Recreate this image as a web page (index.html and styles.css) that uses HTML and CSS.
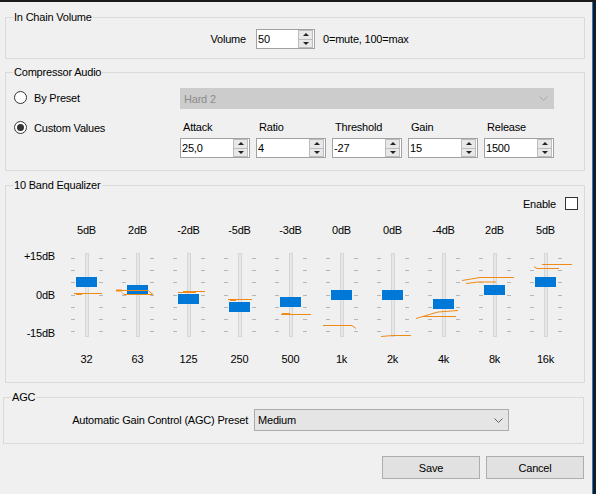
FILE: index.html
```html
<!DOCTYPE html>
<html lang="en">
  <head>
    <meta charset="UTF-8" />
    <title>Audio Settings</title>
    <link rel="stylesheet" href="styles.css">
  </head>
  <body>
    <div class="window">
      <fieldset class="group volume-group">
        <legend>In Chain Volume</legend>
        <div class="volume-row">
          <span class="row-label volume-label">Volume</span>
          <div class="spin volume-spin">
            <span class="spin-value">50</span>
            <span class="spin-btns"><i class="up"></i><i class="down"></i></span>
          </div>
          <span class="hint">0=mute, 100=max</span>
        </div>
      </fieldset>

      <fieldset class="group compressor-group">
        <legend>Compressor Audio</legend>
        <div class="compressor">
          <div class="radio"><span class="dot"></span>By Preset</div>
          <div class="combo disabled">
            <span class="combo-text">Hard 2</span>
            <svg class="chevron" width="9" height="5" viewBox="0 0 9 5"><path d="M0.5 0.5 L4.5 4.5 L8.5 0.5" fill="none" stroke="#a8a8a8" /></svg>
          </div>
          <div class="radio checked"><span class="dot"></span>Custom Values</div>
          <div class="params">
            <span class="param-label">Attack</span>
            <span class="param-label">Ratio</span>
            <span class="param-label">Threshold</span>
            <span class="param-label">Gain</span>
            <span class="param-label">Release</span>
            <div class="spin"><span class="spin-value">25,0</span><span class="spin-btns"><i class="up"></i><i class="down"></i></span></div>
            <div class="spin"><span class="spin-value">4</span><span class="spin-btns"><i class="up"></i><i class="down"></i></span></div>
            <div class="spin"><span class="spin-value">-27</span><span class="spin-btns"><i class="up"></i><i class="down"></i></span></div>
            <div class="spin"><span class="spin-value">15</span><span class="spin-btns"><i class="up"></i><i class="down"></i></span></div>
            <div class="spin"><span class="spin-value">1500</span><span class="spin-btns"><i class="up"></i><i class="down"></i></span></div>
          </div>
        </div>
      </fieldset>

      <fieldset class="group eq-group">
        <legend>10 Band Equalizer</legend>
        <div class="enable-row">Enable<span class="check"></span></div>
        <div class="bands">
          <div class="scale">
            <span>+15dB</span>
            <span>0dB</span>
            <span>-15dB</span>
          </div>
          <div class="band"><span class="db">5dB</span><div class="slider"><span class="track"></span><span class="thumb" style="top: 30px"></span></div><span class="freq">32</span></div>
          <div class="band"><span class="db">2dB</span><div class="slider"><span class="track"></span><span class="thumb" style="top: 38px"></span></div><span class="freq">63</span></div>
          <div class="band"><span class="db">-2dB</span><div class="slider"><span class="track"></span><span class="thumb" style="top: 47px"></span></div><span class="freq">125</span></div>
          <div class="band"><span class="db">-5dB</span><div class="slider"><span class="track"></span><span class="thumb" style="top: 55px"></span></div><span class="freq">250</span></div>
          <div class="band"><span class="db">-3dB</span><div class="slider"><span class="track"></span><span class="thumb" style="top: 50px"></span></div><span class="freq">500</span></div>
          <div class="band"><span class="db">0dB</span><div class="slider"><span class="track"></span><span class="thumb" style="top: 43px"></span></div><span class="freq">1k</span></div>
          <div class="band"><span class="db">0dB</span><div class="slider"><span class="track"></span><span class="thumb" style="top: 43px"></span></div><span class="freq">2k</span></div>
          <div class="band"><span class="db">-4dB</span><div class="slider"><span class="track"></span><span class="thumb" style="top: 52px"></span></div><span class="freq">4k</span></div>
          <div class="band"><span class="db">2dB</span><div class="slider"><span class="track"></span><span class="thumb" style="top: 38px"></span></div><span class="freq">8k</span></div>
          <div class="band"><span class="db">5dB</span><div class="slider"><span class="track"></span><span class="thumb" style="top: 30px"></span></div><span class="freq">16k</span></div>

          <!-- orange curve leftovers drawn over the sliders -->
          <svg class="curve" width="580" height="160" viewBox="0 0 580 160">
            <g fill="none" stroke="#f08a17" stroke-width="1">
              <path d="M68 69.5 H96" />
              <path d="M70 70 H76" stroke-width="2" />
              <path d="M110 66.5 H142 L147 70.5 H118 L116 68.5" />
              <path d="M110 66.5 H116" stroke-width="2" />
              <path d="M177 67.5 H199" />
              <path d="M172 68.5 H190" />
              <path d="M222 75.5 H246" />
              <path d="M224 76 H230" stroke-width="2" />
              <path d="M275 90.5 H305" />
              <path d="M276 90 H284" stroke-width="2" />
              <path d="M317 101.5 H346 L350 104.5" />
              <path d="M375 112.5 L387 111.5 H405" />
              <path d="M410 94.5 L432 88 L452 86.5" />
              <path d="M417 92.5 H450" />
              <path d="M456 56.5 L474 53.5 H508" />
              <path d="M460 59.5 L472 58 H490" />
              <path d="M536 40.5 H566" />
              <path d="M528 42.5 L531 44.5 H553" />
            </g>
          </svg>
        </div>
      </fieldset>

      <fieldset class="group agc-group">
        <legend>AGC</legend>
        <div class="agc-row">
          <span class="row-label agc-label">Automatic Gain Control (AGC) Preset</span>
          <div class="combo agc-combo">
            <span class="combo-text">Medium</span>
            <svg class="chevron" width="9" height="5" viewBox="0 0 9 5"><path d="M0.5 0.5 L4.5 4.5 L8.5 0.5" fill="none" stroke="#606060" /></svg>
          </div>
        </div>
      </fieldset>

      <div class="buttons">
        <button class="btn">Save</button>
        <button class="btn">Cancel</button>
      </div>
    </div>
  </body>
</html>
```

FILE: styles.css
```css
body {
  margin: 0;
  background: #1a1a1a;
  font-family: "Liberation Sans", Arial, sans-serif;
  font-size: 11px;
  letter-spacing: -0.2px;
  color: #000;
}
.window {
  width: 592px;
  height: 488px;
  margin-top: 2px;
  padding-top: 9px;
  box-sizing: content-box;
  background: #f0f0f0;
  border-right: 1px solid #1a7fd4;
  border-bottom: 1px solid #1a7fd4;
}
.window > * {
  box-sizing: border-box;
}

/* group boxes */
.group {
  margin: 0 0 0 5px;
  width: 580px;
  padding: 0;
  min-width: 0;
  border: 1px solid #dadada;
}
.group legend {
  margin-left: 7px;
  padding: 0 1px;
  line-height: 13px;
}
.compressor-group {
  margin-top: 7px;
}
.eq-group {
  margin-top: 8px;
}
.agc-group {
  margin-top: 8px;
  margin-left: 3px;
  width: 581px;
}

.row-label {
  text-align: right;
  flex: none;
}

/* volume */
.volume-row {
  display: flex;
  align-items: center;
  margin: 5px 0 9px;
}
.volume-label {
  width: 240px;
}
.volume-spin {
  width: 59px;
  margin-left: 10px;
}
.hint {
  margin-left: 8px;
}

/* numeric up/down */
.spin {
  display: flex;
  height: 20px;
  box-sizing: border-box;
  border: 1px solid #a2a2a2;
  background: #fff;
}
.spin-value {
  flex: 1;
  padding-left: 1px;
  line-height: 18px;
}
.spin-btns {
  display: flex;
  flex-direction: column;
  width: 13px;
  margin: 0 1px 0 0;
  border: 1px solid #bcbcbc;
  background: #e8e8e8;
}
.spin-btns i {
  flex: 1;
  display: flex;
  align-items: center;
  justify-content: center;
}
.spin-btns i::before {
  content: "";
  border-left: 3px solid transparent;
  border-right: 3px solid transparent;
}
.spin-btns .up {
  border-bottom: 1px solid #bcbcbc;
}
.spin-btns .up::before {
  border-bottom: 3px solid #222;
}
.spin-btns .down::before {
  border-top: 3px solid #222;
}

/* compressor */
.compressor {
  display: grid;
  grid-template-columns: 166px 374px;
  row-gap: 12px;
  margin: 9px 0 12px 8px;
}
.radio {
  display: flex;
  align-items: center;
  gap: 7px;
  height: 13px;
  align-self: start;
}
.radio:first-child {
  margin-top: 3px;
}
.dot {
  width: 13px;
  height: 13px;
  box-sizing: border-box;
  border: 1px solid #333;
  border-radius: 50%;
  background: #fff;
  display: flex;
  align-items: center;
  justify-content: center;
}
.radio.checked .dot::before {
  content: "";
  width: 7px;
  height: 7px;
  border-radius: 50%;
  background: #333;
}

.combo {
  display: flex;
  align-items: center;
  height: 21px;
  box-sizing: border-box;
  padding-left: 3px;
  border: 1px solid #acacac;
  background: #e5e5e5;
}
.combo.disabled {
  border-color: #cccccc;
  background: #cccccc;
  color: #8c8c8c;
}
.combo-text {
  flex: 1;
}
.chevron {
  margin-right: 5px;
}

.params {
  display: grid;
  grid-template-columns: repeat(5, 70px);
  column-gap: 6px;
  row-gap: 4px;
}
.param-label {
  line-height: 13px;
  padding-left: 3px;
}

/* equalizer */
.enable-row {
  display: flex;
  justify-content: flex-end;
  align-items: center;
  height: 13px;
  margin: 5px 6px 0 0;
}
.check {
  width: 13px;
  height: 13px;
  box-sizing: border-box;
  margin-left: 9px;
  border: 1px solid #333;
  background: #fff;
}
.bands {
  position: relative;
  display: grid;
  grid-template-columns: 55px repeat(10, 51px);
  margin: 14px 0 16px;
}
.scale {
  display: flex;
  flex-direction: column;
  justify-content: space-between;
  align-items: flex-end;
  height: 90px;
  margin-top: 26px;
  padding-right: 6px;
  line-height: 13px;
}
.band {
  display: flex;
  flex-direction: column;
  align-items: center;
  line-height: 13px;
}
.slider {
  position: relative;
  width: 100%;
  height: 96px;
  margin: 10px 0;
}
.slider::before,
.slider::after {
  content: "";
  position: absolute;
  top: 11px;
  width: 4px;
  height: 1px;
  background: #b6b6b6;
  box-shadow: 0 12px #b6b6b6, 0 24px #b6b6b6, 0 37px #b6b6b6, 0 49px #b6b6b6,
    0 61px #b6b6b6, 0 73px #b6b6b6;
}
.slider::before {
  left: calc(50% - 16px);
}
.slider::after {
  left: calc(50% + 12px);
}
.track {
  position: absolute;
  top: 6px;
  left: calc(50% - 2px);
  width: 4px;
  height: 84px;
  box-sizing: border-box;
  border: 1px solid #d6d6d6;
  background: #e7e7e7;
}
.thumb {
  position: absolute;
  left: calc(50% - 11px);
  width: 21px;
  height: 10px;
  background: #0078d7;
}
.curve {
  position: absolute;
  left: 0;
  top: 0;
  overflow: visible;
  pointer-events: none;
}

/* agc */
.agc-row {
  display: flex;
  align-items: center;
  margin: 5px 0 12px;
}
.agc-label {
  width: 244px;
}
.agc-combo {
  width: 255px;
  height: 22px;
  margin-left: 6px;
}

/* buttons */
.buttons {
  display: flex;
  justify-content: flex-end;
  gap: 6px;
  margin-top: 12px;
  padding-right: 8px;
}
.btn {
  width: 98px;
  height: 23px;
  border: 1px solid #adadad;
  background: #e1e1e1;
  font-family: "Liberation Sans", Arial, sans-serif;
  font-size: 11px;
  letter-spacing: -0.2px;
  color: #000;
  padding: 0;
}
```
